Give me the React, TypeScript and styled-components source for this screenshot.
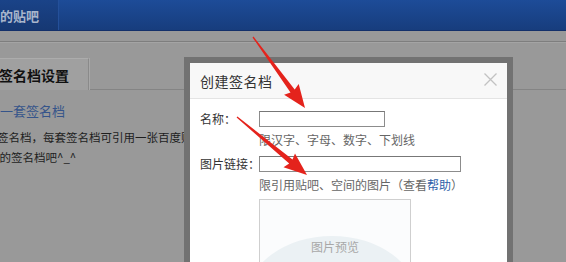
import React from 'react';
import styled, {createGlobalStyle} from "styled-components";

const GlobalStyle = createGlobalStyle`
    html, body {
        margin: 0;
        padding: 0;
        background: #999999;
        overflow: hidden;
    }
    body {
        font-family: "Noto Sans CJK SC", "Noto Sans", sans-serif;
    }
`

const cjk = `"Noto Sans CJK SC", "Noto Sans", sans-serif`

type Point = { x: number, y: number }

// red pointing arrow, drawn from tail to tip
const Arrow = ({from, to}: { from: Point, to: Point }) => {
    const dx = to.x - from.x
    const dy = to.y - from.y
    const len = Math.hypot(dx, dy)
    const ux = dx / len, uy = dy / len
    const nx = -uy, ny = ux
    const headLen = 21
    const headHalf = 9
    const shaftHalf = 2.6
    const bx = to.x - ux * headLen
    const by = to.y - uy * headLen
    const pts = [
        [from.x + nx * 0.6, from.y + ny * 0.6],
        [bx + nx * shaftHalf, by + ny * shaftHalf],
        [bx + nx * headHalf - ux * 2, by + ny * headHalf - uy * 2],
        [to.x, to.y],
        [bx - nx * headHalf - ux * 2, by - ny * headHalf - uy * 2],
        [bx - nx * shaftHalf, by - ny * shaftHalf],
        [from.x - nx * 0.6, from.y - ny * 0.6],
    ].map(p => p.map(v => v.toFixed(1)).join(',')).join(' ')
    return <polygon points={pts} fill="#e4231c"/>
}

export default function App() {
    return (
        <Page>
            <GlobalStyle/>
            <TopBar>
                <NavItem><NavText>我的贴吧</NavText></NavItem>
            </TopBar>
            <SubBar/>
            <TabRow>
                <Tab>签名档设置</Tab>
            </TabRow>
            <Content>
                <SectionTitle>创建一套签名档</SectionTitle>
                <Desc shift={23}>签名档，每套签名档可引用一张百度贴吧图片</Desc>
                <Desc shift={14}>你的签名档吧^_^</Desc>
            </Content>

            <DialogFrame>
                <Dialog>
                    <DialogHeader>
                        创建签名档
                        <CloseButton aria-label="关闭">
                            <svg width="13" height="13" viewBox="0 0 13 13">
                                <path d="M0.5 0.5 L12.5 12.5 M12.5 0.5 L0.5 12.5" stroke="#c2c2c2" strokeWidth="1.3"/>
                            </svg>
                        </CloseButton>
                    </DialogHeader>
                    <DialogBody>
                        <Label>名称：</Label>
                        <Field>
                            <TextInput width={126}/>
                            <Hint>限汉字、字母、数字、下划线</Hint>
                        </Field>
                        <Label>图片链接：</Label>
                        <Field>
                            <TextInput width={202}/>
                            <Hint>限引用贴吧、空间的图片（查看<HelpLink>帮助</HelpLink>）</Hint>
                            <Preview>
                                <svg width="150" height="80" viewBox="0 0 150 80">
                                    <ellipse cx="72" cy="100" rx="86" ry="64" fill="#ebf1f4"/>
                                </svg>
                                <PreviewText>图片预览</PreviewText>
                            </Preview>
                        </Field>
                    </DialogBody>
                </Dialog>
            </DialogFrame>

            <ArrowLayer width="566" height="262" viewBox="0 0 566 262">
                <Arrow from={{x: 253, y: 37}} to={{x: 305, y: 108}}/>
                <Arrow from={{x: 237, y: 117}} to={{x: 307, y: 175}}/>
            </ArrowLayer>
        </Page>
    );
}

const Page = styled.div`
    position: relative;
    width: 566px;
    height: 262px;
    overflow: hidden;
    background: #999999;
`

const TopBar = styled.div`
    display: flex;
    height: 30px;
    background: linear-gradient(#1d4c98, #173d7d);
    border-bottom: 1px solid #13306a;
`

const NavItem = styled.div`
    width: 58px;
    display: flex;
    align-items: center;
    background: linear-gradient(#1a4388, #163873);
    border-right: 1px solid #24509a;
    overflow: hidden;
`

const NavText = styled.span`
    margin-left: -13px;
    font-family: ${cjk};
    font-size: 13px;
    font-weight: 700;
    color: #a9b6cc;
    white-space: nowrap;
`

const SubBar = styled.div`
    height: 10px;
    border-bottom: 1px solid #7e7e7e;
    box-shadow: 0 1px 0 #a4a4a4;
`

const TabRow = styled.div`
    display: flex;
    margin-top: 16px;
    height: 31px;
    border-bottom: 1px solid #848484;
`

const Tab = styled.div`
    width: 88px;
    margin-bottom: -1px;
    display: flex;
    align-items: center;
    font-family: ${cjk};
    font-size: 14px;
    font-weight: 700;
    color: #111;
    background: #a0a0a0;
    border-top: 1px solid #acacac;
    border-right: 1px solid #8a8a8a;
    box-shadow: 1px 0 0 #a8a8a8;
    white-space: nowrap;
    overflow: hidden;
    text-indent: -1px;
`

const Content = styled.div`
    display: flex;
    flex-direction: column;
    padding-top: 11px;
    margin-left: -26px;
`

const SectionTitle = styled.div`
    font-family: ${cjk};
    font-size: 13px;
    line-height: 20px;
    color: #35548a;
    margin-bottom: 6px;
`

const Desc = styled.div<{ shift: number }>`
    font-family: ${cjk};
    font-size: 11.5px;
    line-height: 20px;
    color: #1e1e1e;
    white-space: nowrap;
    margin-left: ${props => props.shift}px;
`

const DialogFrame = styled.div`
    position: absolute;
    left: 184px;
    top: 57px;
    width: 329px;
    height: 230px;
    box-sizing: border-box;
    padding: 6px;
    background: #727272;
`

const Dialog = styled.div`
    height: 100%;
    background: #ffffff;
    display: flex;
    flex-direction: column;
`

const DialogHeader = styled.div`
    position: relative;
    height: 36px;
    display: flex;
    align-items: center;
    padding-left: 10px;
    background: #f8f8f8;
    border-bottom: 1px solid #e4e4e4;
    font-family: ${cjk};
    font-size: 14px;
    letter-spacing: 0.5px;
    color: #333;
`

const CloseButton = styled.span`
    position: absolute;
    right: 10px;
    top: 10px;
    width: 13px;
    height: 13px;
    display: flex;
`

const DialogBody = styled.div`
    display: grid;
    grid-template-columns: 59px 1fr;
    align-items: start;
    padding: 12px 0 0 10px;
`

const Label = styled.div`
    font-family: ${cjk};
    font-size: 12px;
    line-height: 16px;
    color: #333;
    white-space: nowrap;
`

const Field = styled.div`
    display: flex;
    flex-direction: column;
    align-items: flex-start;
`

const TextInput = styled.input.attrs({type: 'text'})<{ width: number }>`
    width: ${props => props.width}px;
    height: 16px;
    box-sizing: border-box;
    margin: 0;
    padding: 0 2px;
    border: 1px solid #8c8c8c;
    border-top-color: #777;
    background: #fff;
    outline: none;
`

const Hint = styled.div`
    margin: 4px 0 7px;
    font-family: ${cjk};
    font-size: 12px;
    line-height: 18px;
    color: #666;
    white-space: nowrap;
`

const HelpLink = styled.span`
    color: #2d5fa8;
`

const Preview = styled.div`
    position: relative;
    width: 152px;
    height: 82px;
    margin-top: -2px;
    box-sizing: border-box;
    border: 1px solid #cfcfcf;
    background: #fbfcfd;
    overflow: hidden;

    svg {
        display: block;
    }
`

const PreviewText = styled.span`
    position: absolute;
    left: 0;
    right: 0;
    top: 39px;
    text-align: center;
    font-family: ${cjk};
    font-size: 12px;
    line-height: 16px;
    color: #a8a8a8;
`

const ArrowLayer = styled.svg`
    position: absolute;
    left: 0;
    top: 0;
    pointer-events: none;
`
